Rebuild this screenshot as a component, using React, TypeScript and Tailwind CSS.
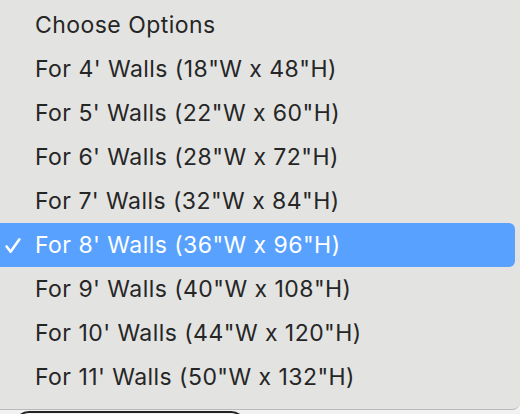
import React from 'react';

const options = [
  'Choose Options',
  `For 4' Walls (18"W x 48"H)`,
  `For 5' Walls (22"W x 60"H)`,
  `For 6' Walls (28"W x 72"H)`,
  `For 7' Walls (32"W x 84"H)`,
  `For 8' Walls (36"W x 96"H)`,
  `For 9' Walls (40"W x 108"H)`,
  `For 10' Walls (44"W x 120"H)`,
  `For 11' Walls (50"W x 132"H)`,
];

const selected = 5;

const Check = () => (
  <svg width="16" height="17" viewBox="0 0 16 17" className="shrink-0">
    <path d="M1.6 9.4 L5.6 14.8 L14.4 2.2" fill="none" stroke="white" strokeWidth="2.5" strokeLinecap="round" strokeLinejoin="round" />
  </svg>
);

export default function App() {
  return (
    <div className="h-[414px] w-[520px] overflow-hidden bg-[#f2f2f2]" style={{ fontFamily: 'Inter, "Noto Sans", sans-serif' }}>
      <div className="flex flex-col rounded-br-[8px] border-b border-[#b9b9b9] bg-[#e3e3e2] pt-[3px] pb-[10px] pr-[5px]">
        {options.map((opt, i) => {
          const active = i === selected;
          return (
            <div
              key={opt}
              className={
                active
                  ? 'flex h-[44px] items-center rounded-r-[6px] bg-[#58a1ff] text-white'
                  : 'flex h-[44px] items-center text-[#262626]'
              }
            >
              <div className="flex w-[35px] justify-start pl-[5px]">{active && <Check />}</div>
              <span className="text-[23px] leading-none tracking-[0.45px]">{opt}</span>
            </div>
          );
        })}
      </div>
      <div className="ml-[14px] mt-[1px] h-[30px] w-[232px] rounded-[16px] border-2 border-[#222]" />
    </div>
  );
}
